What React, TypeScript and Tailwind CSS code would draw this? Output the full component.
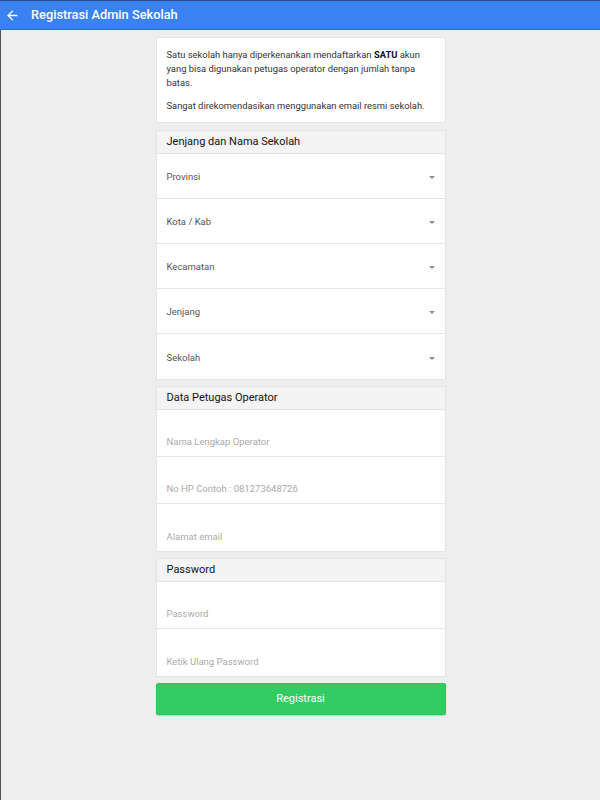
import { ArrowLeft } from "lucide-react";

const selects = ["Provinsi", "Kota / Kab", "Kecamatan", "Jenjang", "Sekolah"];

function SectionHead({ title }: { title: string }) {
  return (
    <div className="h-[23px] flex items-center px-[10px] pt-[1px] bg-[#f4f4f4] border-b border-[#e2e2e2] text-[11px] text-[#111]">
      {title}
    </div>
  );
}

function SelectRow({ label, last }: { label: string; last?: boolean }) {
  return (
    <div className={`h-[45px] flex items-center justify-between px-[10px] pt-[3px] ${last ? "" : "border-b border-[#e6e6e6]"}`}>
      <span className="text-[9.5px] text-[#555]">{label}</span>
      <span className="w-0 h-0 border-l-[3.5px] border-r-[3.5px] border-t-[3.5px] border-l-transparent border-r-transparent border-t-[#888]" />
    </div>
  );
}

function InputRow({ placeholder, last }: { placeholder: string; last?: boolean }) {
  return (
    <div className={`h-[47px] flex items-end px-[10px] pb-[7px] ${last ? "" : "border-b border-[#e6e6e6]"}`}>
      <span className="text-[9.5px] text-[#aaa]">{placeholder}</span>
    </div>
  );
}

export default function App() {
  return (
    <div className="w-[600px] h-[800px] flex flex-col bg-[#eeeeee] font-['Roboto',sans-serif] overflow-hidden">
      <div className="h-[30px] shrink-0 flex items-center bg-[#3a82f2] border-t border-[#2a4a80] border-b border-b-[#2f6cd0] text-white">
        <ArrowLeft className="ml-[5px] w-[15px] h-[15px]" strokeWidth={2.2} />
        <span className="ml-[11px] text-[12.8px] font-medium">Registrasi Admin Sekolah</span>
      </div>
      <div className="flex-1 border-l border-[#555] flex justify-center">
        <div className="w-[290px] pt-[7px] flex flex-col gap-[6px]">
          <div className="bg-white border border-[#e4e4e4] px-[10px] pt-[10px] pb-[9px] text-[9.4px] leading-[14px] text-[#333]">
            <p>
              Satu sekolah hanya diperkenankan mendaftarkan <b className="font-bold text-[#111]">SATU</b> akun yang bisa digunakan petugas operator dengan jumlah tanpa batas.
            </p>
            <p className="mt-[9px]">Sangat direkomendasikan menggunakan email resmi sekolah.</p>
          </div>

          <div className="mt-[1px] bg-white border border-[#e4e4e4]">
            <SectionHead title="Jenjang dan Nama Sekolah" />
            {selects.map((s, i) => (
              <SelectRow key={s} label={s} last={i === selects.length - 1} />
            ))}
          </div>

          <div className="bg-white border border-[#e4e4e4]">
            <SectionHead title="Data Petugas Operator" />
            <InputRow placeholder="Nama Lengkap Operator" />
            <InputRow placeholder="No HP Contoh : 081273648726" />
            <InputRow placeholder="Alamat email" last />
          </div>

          <div className="bg-white border border-[#e4e4e4]">
            <SectionHead title="Password" />
            <InputRow placeholder="Password" />
            <InputRow placeholder="Ketik Ulang Password" last />
          </div>

          <button className="h-[32px] rounded-[2px] bg-[#33cc63] border border-[#2bc45a] text-white text-[11px] shadow-[0_1px_1px_rgba(0,0,0,0.15)]">
            Registrasi
          </button>
        </div>
      </div>
    </div>
  );
}
